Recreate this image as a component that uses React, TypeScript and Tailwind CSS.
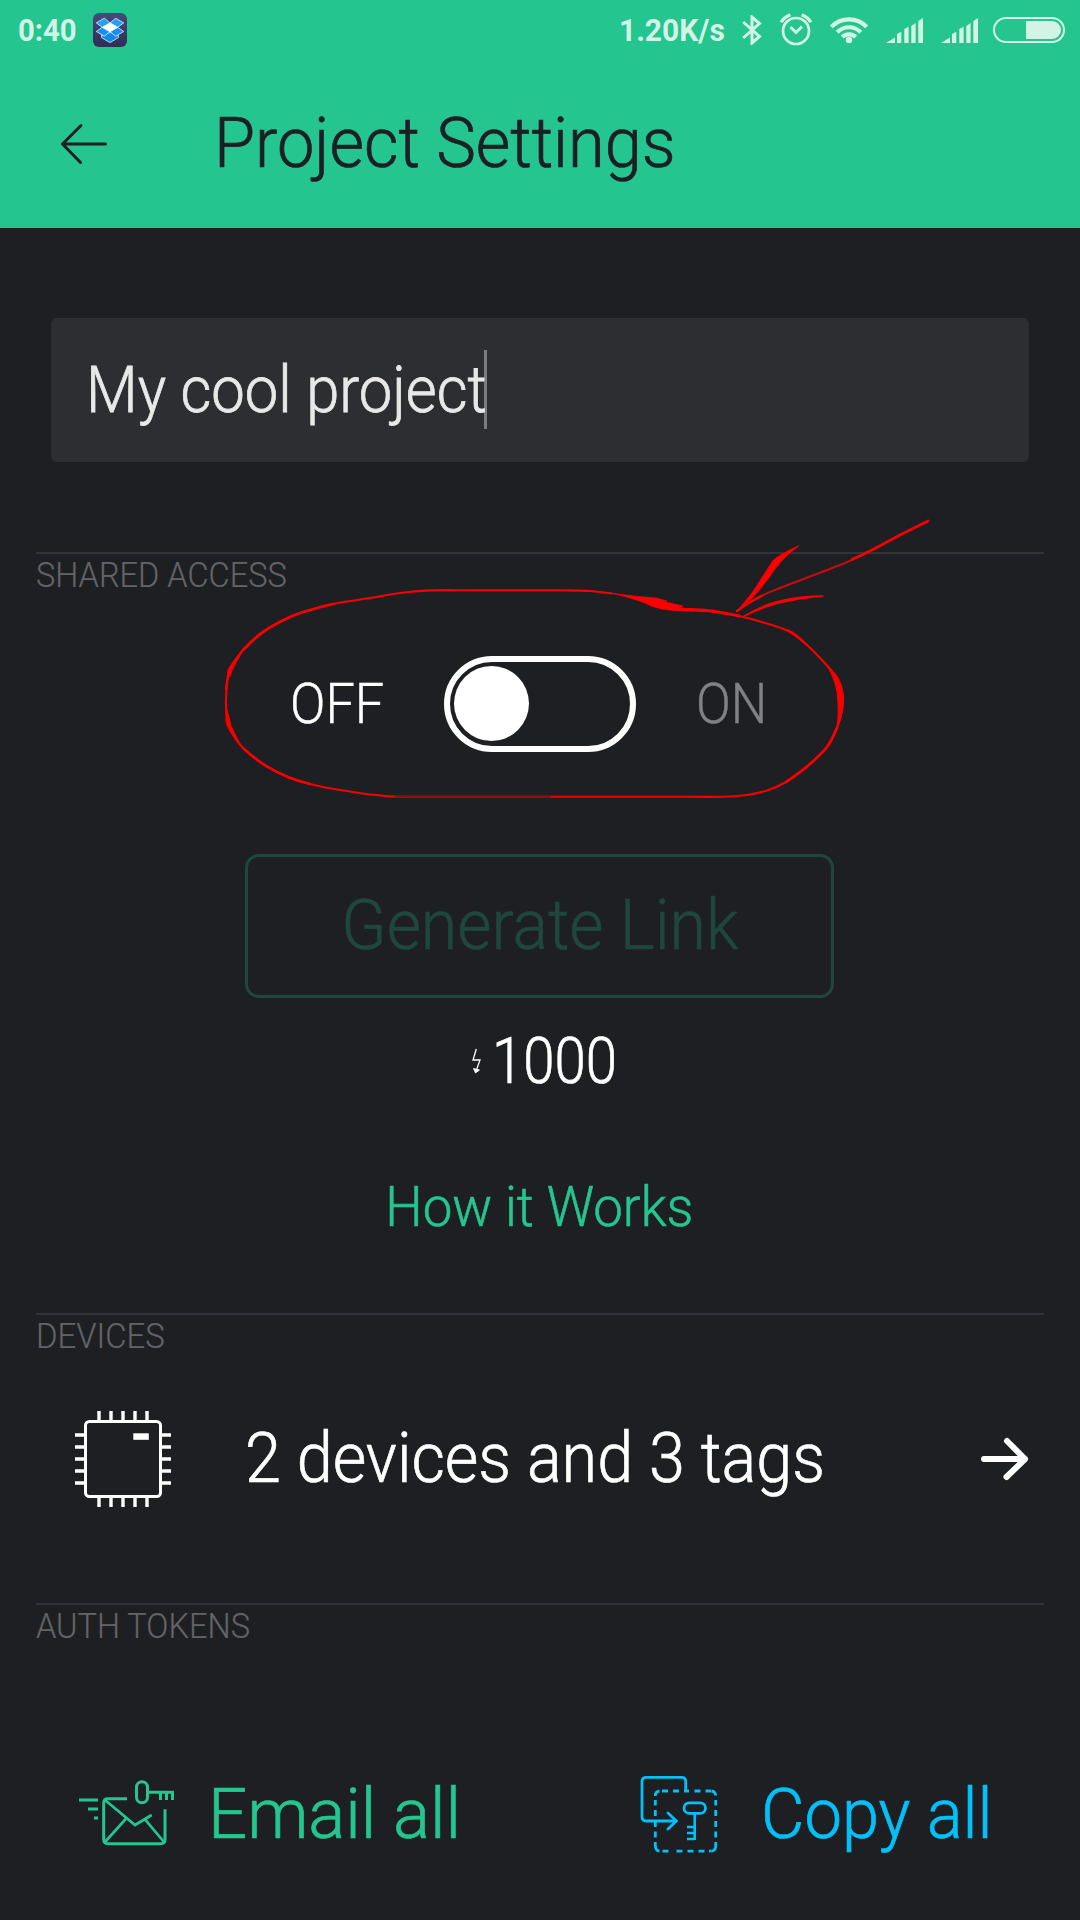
import React from "react";

type Point = [number, number];

/** Smooth path through a list of points. */
function curve(pts: Point[]): string {
  let d = `M${pts[0][0]} ${pts[0][1]}`;
  for (let i = 0; i < pts.length - 1; i++) {
    const p0 = pts[i - 1] ?? pts[i];
    const p1 = pts[i];
    const p2 = pts[i + 1];
    const p3 = pts[i + 2] ?? p2;
    d += `C${p1[0] + (p2[0] - p0[0]) / 6} ${p1[1] + (p2[1] - p0[1]) / 6} ${p2[0] - (p3[0] - p1[0]) / 6} ${p2[1] - (p3[1] - p1[1]) / 6} ${p2[0]} ${p2[1]}`;
  }
  return d;
}

const loop: Point[] = [
  [612, 593.5], [590, 591], [560, 590.3], [510, 590.2], [460, 590.2], [430, 590.4], [400, 593], [370, 598], [333, 604], [312, 609.5],
  [290, 617], [263, 632], [243, 650], [229.5, 671], [226, 700], [227.5, 720], [232, 733], [243, 748], [263, 764], [288, 777],
  [310, 784], [330, 788.3], [356, 792.5], [376, 795], [396, 796.6], [425, 796.8], [480, 796.8], [600, 796.8], [690, 796.8], [723, 796.7],
  [747, 795], [767, 790.5], [786, 782], [807, 766.5], [827, 747], [837, 728], [842, 710],
  [842.5, 693], [838, 679], [827, 665.5], [807, 645], [790, 632], [772, 625], [739, 616], [712, 611.5], [690, 609.5], [672, 608.5],
];

function Annotation() {
  return (
    <svg className="pointer-events-none absolute left-[215px] top-[510px] h-[300px] w-[725px]" viewBox="215 510 725 300" fill="none" stroke="#f60000" strokeLinecap="round" strokeLinejoin="round">
      <path d={curve(loop)} strokeWidth="2.1" />
      <path d={curve([[333, 604], [312, 609.5], [290, 617], [263, 632], [243, 650]])} strokeWidth="2.8" />
      <path d="M245 648Q232 662 228 670L225.500 690Q226 680 230 676Q234 664 245 648Z" fill="#f60000" strokeWidth="1" />
      <path d="M226 707Q229 716 231 726L240 744Q228 731 226 722Z" fill="#f60000" strokeWidth="1" />
      <path d={curve([[243, 748], [263, 764], [288, 777], [310, 784]])} strokeWidth="2.6" />
      <path d={curve([[396, 796.7], [425, 796.8], [480, 796.8], [550, 796.8]])} stroke="#8c1013" strokeWidth="2.1" />
      <path d={curve([[786, 782], [807, 766.5], [827, 747], [837, 728]])} strokeWidth="2.7" />
      <path d="M827 665Q842 682 843.500 698Q843 716 837 727Q839 716 838 702Q838 684 827 665Z" fill="#f60000" strokeWidth="1.2" />
      <path d="M788 630Q797 634 808 646Q796 636 788 630Z" fill="#f60000" strokeWidth="1.5" />
      <path d="M613 593.500Q640 597 656 598L667 601L665 602L683 606L679 608L692 609L712 612L672 610.300Q656 609 645 603Q632 598 613 593.500Z" fill="#ff0000" strokeWidth="0.8" />
      <path d={curve([[690, 609.5], [712, 611], [739, 616]])} strokeWidth="2.8" />
      <path d={curve([[737, 611], [757, 598], [780, 588], [840, 565], [862, 555]])} stroke="#c80b0c" strokeWidth="2" />
      <path d={curve([[737, 611], [747, 604], [762, 596]])} strokeWidth="2.2" />
      <path d={curve([[852, 559.5], [873, 549.5], [902, 534], [928, 521]])} strokeWidth="2.8" />
      <path d="M737 611.500Q752 594 757 586Q765 573 773 561Q780 554 798.500 546Q784 556 774 570Q760 592 737 611.500Z" fill="#ff0000" strokeWidth="1.2" />
      <path d="M744 616Q765 604 780 601Q800 596 823 596Q800 598 779 603Q766 606 744 616Z" fill="#ff0000" strokeWidth="1.4" />
    </svg>
  );
}

function DropboxIcon() {
  return (
    <span className="ml-[17px] flex size-[34px] items-center justify-center rounded-[6px] bg-linear-to-b from-[#474b7b] to-[#2d2f55]">
      <svg className="size-[34px]" viewBox="93 13 34 34" stroke="#e6f4ff" strokeWidth="0.8" strokeLinejoin="round">
        <path d="M101.500 35.500L110 32L118.500 35.500V37.500L110 42.600L101.500 37.500Z" fill="#1387ea" />
        <path d="M96.300 31.500L102.300 27.300L110 31.700L104.300 36.200ZM123.700 31.500L117.700 27.300L110 31.700L115.700 36.200Z" fill="#178ff0" />
        <path d="M96.300 22.900L104.300 18.200L110 23L102.300 27.300ZM123.700 22.900L115.700 18.200L110 23L117.700 27.300Z" fill="#1ea0fb" />
        <path d="M102.300 27.300L110 23L117.700 27.300L110 31.700Z" fill="#fff" />
      </svg>
    </span>
  );
}

function Signal({ className }: { className: string }) {
  return (
    <svg className={className} viewBox="0 0 37 25" fill="#d3f3e6">
      <path d="M0 25L9 19.500V25ZM11 16L15.300 13.800V25H11ZM18.300 11L22.600 8.800V25H18.300ZM25.300 10.500V8L29.600 5V25H25.300ZM32.300 3L37 0V25H32.300Z" />
    </svg>
  );
}

function StatusBar() {
  return (
    <div className="flex h-[60px] items-center font-bold text-[#d3f3e6]">
      <span className="ml-[18px] w-[58px] origin-left scale-x-[0.945] text-[31px] leading-none whitespace-nowrap">0:40</span>
      <DropboxIcon />
      <span className="ml-[492px] w-[106px] origin-left scale-x-[0.966] text-[31px] leading-none whitespace-nowrap">1.20K/s</span>
      <svg className="ml-[16px] h-[30px] w-[21px]" viewBox="741 15 21 30" fill="none" stroke="#d3f3e6" strokeWidth="3">
        <path d="M743.200 22L759.500 36.500L752 43V17L759.500 23.500L743.200 38" />
      </svg>
      <svg className="ml-[18px] h-[34px] w-[32px]" viewBox="780 13 32 34" fill="none" stroke="#d3f3e6" strokeWidth="2.7">
        <circle cx="796" cy="31" r="13" />
        <path d="M790.500 27L796 32.500L802 26.500" strokeWidth="3" />
        <path d="M781.200 22.300Q784 17.200 790.300 14.800M810.800 22.300Q808 17.200 801.700 14.800" strokeWidth="3.2" />
      </svg>
      <svg className="ml-[17px] h-[30px] w-[40px]" viewBox="829 15 40 30" fill="none" stroke="#d3f3e6" strokeWidth="4.200">
        <path d="M831.300 26.900A24.500 24.500 0 0 1 866.700 26.900M837.200 32.200A16.500 16.500 0 0 1 860.800 32.200M842.300 37A9.700 9.700 0 0 1 855.700 37" />
        <circle cx="849" cy="40" r="3.200" fill="#d3f3e6" stroke="none" />
      </svg>
      <Signal className="ml-[17px] h-[25px] w-[37px]" />
      <Signal className="ml-[18px] h-[25px] w-[37px]" />
      <div className="ml-[15px] flex h-[26px] w-[72px] justify-end rounded-full border-2 border-[#d3f3e6] p-[2px]">
        <div className="h-full w-[35px] rounded-r-full bg-[#d3f3e6]" />
      </div>
    </div>
  );
}

function Section({ title, scale, children, className }: { title: string; scale: string; children?: React.ReactNode; className: string }) {
  return (
    <section className={className}>
      <div className="mx-[36px] h-[2px] bg-[#323338]" />
      <h2 className={`ml-[36px] mt-[3.500px] origin-left text-[35px] leading-none whitespace-nowrap text-[#636467] [-webkit-text-stroke:0.2px] ${scale}`}>{title}</h2>
      {children}
    </section>
  );
}

export default function App() {
  return (
    <div className="relative flex h-[1920px] w-[1080px] flex-col overflow-hidden bg-[#1e1f23] font-['Roboto',sans-serif] font-light text-white">
      <header className="h-[228px] bg-[#25c58f] text-[#1e1f23]">
        <StatusBar />
        <div className="flex h-[168px] items-center">
          <svg className="ml-[60px] size-[48px]" viewBox="60 120 48 48" fill="none" stroke="#1e1f23" strokeWidth="3" strokeLinecap="round" strokeLinejoin="round">
            <path d="M105.500 144H62.500M81 125.500L62.500 144L80.500 162.500" />
          </svg>
          <h1 className="-mt-[2px] ml-[106px] origin-left scale-x-[0.953] text-[70px] leading-none whitespace-nowrap [-webkit-text-stroke:0.7px]">Project Settings</h1>
        </div>
      </header>

      <div className="mx-[51px] mt-[90px] flex h-[144px] shrink-0 items-center rounded-[6px] bg-[#2d2e32] pl-[35px]">
        <span className="mt-[1px] w-[398px] origin-left scale-x-[0.918] text-[65px] leading-none whitespace-nowrap text-[#e8e8e8] [-webkit-text-stroke:0.8px]">My cool project</span>
        <span className="-mt-[1px] h-[79px] w-[3px] bg-[#7b7c7f]" />
      </div>

      <Section title="SHARED ACCESS" scale="scale-x-[0.929]" className="mt-[90px] h-[761px] shrink-0">
        <div className="mt-[63.500px] flex h-[96px] items-center [-webkit-text-stroke:0.4px]">
          <span className="ml-[290px] w-[154px] origin-left scale-x-[0.934] text-[56px] leading-none">OFF</span>
          <div className="h-[96px] w-[192px] rounded-full border-[6px] border-white p-[4px]">
            <div className="size-[75px] rounded-full bg-white" />
          </div>
          <span className="ml-[60px] origin-left scale-x-[0.916] text-[56px] leading-none text-[#828284]">ON</span>
        </div>
        <button className="mt-[102px] ml-[245px] flex h-[144px] w-[589px] items-center justify-center rounded-[14px] border-[3px] border-[#1f473d] text-[#1f473d]">
          <span className="-mt-[2px] scale-x-[0.946] text-[70px] leading-none whitespace-nowrap [-webkit-text-stroke:0.6px]">Generate Link</span>
        </button>
        <div className="mt-[31px] flex h-[65px] items-center">
          <svg className="-mt-[1px] ml-[471px] h-[26px] w-[12px]" viewBox="471 1048 12 26" fill="none" stroke="#fff" strokeWidth="1.300">
            <path d="M476.300 1049L473 1060H480L476.300 1070.500" />
            <path d="M473.500 1068.500L475.500 1073L479.500 1070Z" fill="#fff" strokeWidth="0.800" />
          </svg>
          <span className="ml-[9px] origin-left scale-x-[0.866] text-[65px] leading-none [-webkit-text-stroke:0.7px]">1000</span>
        </div>
        <p className="mt-[85px] mr-[2px] flex justify-center text-[56px] leading-none text-[#25c58f] [-webkit-text-stroke:0.6px]">
          <span className="scale-x-[0.943] whitespace-nowrap">How it Works</span>
        </p>
      </Section>

      <Section title="DEVICES" scale="scale-x-[0.938]" className="h-[290px] shrink-0">
        <div className="mt-[57.500px] flex h-[96px] items-center">
          <svg className="ml-[75px] size-[96px]" viewBox="75 1411 96 96" fill="none" stroke="#fff">
            <rect x="85.500" y="1421.500" width="75" height="75" rx="4" strokeWidth="3" />
            <path d="M99 1411V1420M111 1411V1420M123 1411V1420M135 1411V1420M147 1411V1420M99 1498V1507M111 1498V1507M123 1498V1507M135 1498V1507M147 1498V1507M75 1435H84M75 1447H84M75 1459H84M75 1471H84M75 1483H84M162 1435H171M162 1447H171M162 1459H171M162 1471H171M162 1483H171" strokeWidth="3.400" />
            <rect x="133.300" y="1433.300" width="15.500" height="6.500" fill="#fff" stroke="none" />
          </svg>
          <span className="-mt-[2px] ml-[74px] w-[735px] origin-left scale-x-[0.925] text-[70px] leading-none whitespace-nowrap [-webkit-text-stroke:0.7px]">2 devices and 3 tags</span>
          <svg className="-ml-[1px] h-[48px] w-[52px]" viewBox="979 1435 52 48" fill="none" stroke="#fff" strokeWidth="6" strokeLinecap="round" strokeLinejoin="round">
            <path d="M984 1459H1025M1007 1441L1025 1459L1006.500 1477" />
          </svg>
        </div>
      </Section>

      <Section title="AUTH TOKENS" scale="scale-x-[0.931]" className="h-[315px] shrink-0">
        <div className="mt-[135px] flex h-[80px] items-center">
          <svg className="ml-[78px] h-[80px] w-[98px]" viewBox="78 1779 98 80" fill="none" stroke="#25c58f" strokeWidth="3">
            <path d="M127 1798.700H108Q103.700 1798.700 103.700 1803V1839.500Q103.700 1843.700 108 1843.700H160.700Q165 1843.700 165 1839.500V1809.300" />
            <path d="M105 1800L135 1825L151.700 1815M105 1842L125.700 1819M145 1819.300L164 1842" strokeWidth="2.700" />
            <rect x="136.500" y="1781.800" width="11" height="21" rx="5.500" />
            <path d="M149 1792.300H174M160.500 1792V1800M166.500 1792V1800M172.500 1792V1800" />
            <path d="M79 1800H98M88 1809H98M94 1818H98" />
          </svg>
          <span className="-mt-[9px] ml-[32px] w-[257px] origin-left scale-x-[0.985] text-[70px] leading-none whitespace-nowrap text-[#25c58f] [-webkit-text-stroke:0.7px]">Email all</span>
          <svg className="-mt-[8px] ml-[175px] h-[80px] w-[80px]" viewBox="640 1775 80 80" fill="none" stroke="#04c0f8" strokeWidth="2.800">
            <path d="M685.700 1791V1781.500Q685.700 1777.400 681.500 1777.400H646.200Q642 1777.400 642 1781.500V1816.800Q642 1821 646.200 1821H676" />
            <path d="M668 1813L676.300 1821L668 1829" strokeLinecap="round" />
            <path d="M655.300 1796Q655.300 1791.500 659.500 1791M711.500 1791Q715.300 1791.500 715.700 1795.500M715.700 1846.500Q715.500 1850.500 711.500 1851.200M659.500 1851.200Q656 1850.800 655.300 1846.500" />
            <path d="M662 1791H668M673 1791H679M684 1791H689M694.500 1791H700.500M705.500 1791H711M662.500 1851.200H668.500M676.500 1851.200H682.500M687.500 1851.200H693.500M698.500 1851.200H704.500M709 1851.200H711.500M655.300 1800V1805.500M655.300 1810V1816M655.300 1821V1827M655.300 1831.500V1837.500M655.300 1842V1847M715.700 1800V1805.500M715.700 1810V1816M715.700 1821V1827M715.700 1831.500V1837.500M715.700 1842V1847" />
            <rect x="684" y="1802.800" width="21.500" height="10.600" rx="5.300" />
            <path d="M694.700 1814V1840M694.700 1827H687M694.700 1833H687M694.700 1839H687" strokeWidth="2.600" />
          </svg>
          <span className="-mt-[9px] ml-[41px] origin-left scale-x-[0.955] text-[70px] leading-none whitespace-nowrap text-[#04c0f8] [-webkit-text-stroke:0.7px]">Copy all</span>
        </div>
      </Section>

      <Annotation />
    </div>
  );
}
